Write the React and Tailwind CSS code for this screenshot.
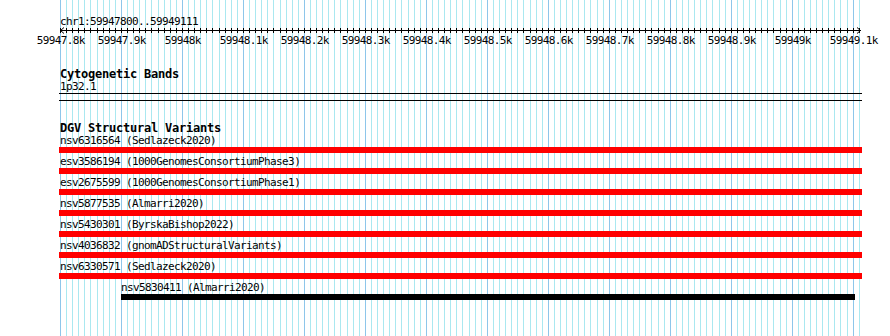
import React from 'react'

const START = 59947800
const PX_PER_10BP = 800 / 131.2

const gridX = (k) => Math.round(60 + k * PX_PER_10BP)

const variants = [
    { id: 'nsv6316564', src: 'Sedlazeck2020' },
    { id: 'esv3586194', src: '1000GenomesConsortiumPhase3' },
    { id: 'esv2675599', src: '1000GenomesConsortiumPhase1' },
    { id: 'nsv5877535', src: 'Almarri2020' },
    { id: 'nsv5430301', src: 'ByrskaBishop2022' },
    { id: 'nsv4036832', src: 'gnomADStructuralVariants' },
    { id: 'nsv6330571', src: 'Sedlazeck2020' },
]

function label(k) {
    const kb = (START + k * 10) / 1000
    return String(Number(kb.toFixed(1))) + 'k'
}

function Grid() {
    const lines = []
    for (let k = 0; k <= 131; k++) {
        lines.push(
            <rect key={k} x={gridX(k)} y={0} width={1} height={336}
                fill={k % 10 === 0 ? '#8ec6ea' : '#aae8f0'} />
        )
    }
    return (
        <svg className="absolute inset-0" width="890" height="336" shapeRendering="crispEdges">
            {lines}
        </svg>
    )
}

function Ruler() {
    const ticks = []
    const labels = []
    for (let k = 0; k <= 131; k++) {
        ticks.push(<rect key={k} x={gridX(k)} y={1} width={1} height={5} fill="#000" />)
        if (k % 10 === 0) {
            labels.push(
                <text key={k} x={gridX(k) + 0.8} y={17} textAnchor="middle" letterSpacing="-0.62"
                    fontFamily="'DejaVu Sans Mono', monospace" fontSize="11" fill="#000">
                    {label(k)}
                </text>
            )
        }
    }
    return (
        <svg className="block" width="890" height="21">
            <g shapeRendering="crispEdges">
                <rect x={60} y={3} width={801} height={1} fill="#000" />
                {ticks}
            </g>
            <path d="M64 0.5 L60.5 3.5 L64 6.5" stroke="#000" fill="none" strokeWidth="1" />
            <path d="M857 0.5 L860.5 3.5 L857 6.5" stroke="#000" fill="none" strokeWidth="1" />
            {labels}
        </svg>
    )
}

export default function App() {
    return (
        <div className="relative w-[890px] h-[336px] bg-white overflow-hidden">
            <Grid />
            <div className="relative font-['DejaVu_Sans_Mono',monospace] text-[11px] tracking-[-0.62px] text-black">
                <div className="pt-[16px] pl-[60px] h-[27px] leading-[11px]">chr1:59947800..59949111</div>
                <Ruler />

                {/* cytogenetic bands */}
                <div className="mt-[20px] pl-[60px] h-[12px] leading-[12px] text-[12px] tracking-[-0.22px] font-bold">Cytogenetic Bands</div>
                <div className="mt-px pl-[60px] h-[11px] leading-[11px]">1p32.1</div>
                <div className="mt-px ml-[59px] w-[803px] h-[8px] border-y border-black" />

                {/* DGV */}
                <div className="mt-[21px] pl-[60px] h-[12px] leading-[12px] text-[12px] tracking-[-0.22px] font-bold">DGV Structural Variants</div>
                <div className="mt-px pl-[60px] flex flex-col gap-[3px]">
                    {variants.map((v) => (
                        <div key={v.id}>
                            <div className="h-[11px] leading-[11px] whitespace-pre">{v.id} ({v.src})</div>
                            <div className="mt-px -ml-px w-[803px] h-[6px] bg-[#ff0000]" />
                        </div>
                    ))}
                    <div className="ml-[61px]">
                        <div className="h-[11px] leading-[11px] whitespace-pre">nsv5830411 (Almarri2020)</div>
                        <div className="mt-px w-[734px] h-[6px] bg-black" />
                    </div>
                </div>
            </div>
        </div>
    )
}
